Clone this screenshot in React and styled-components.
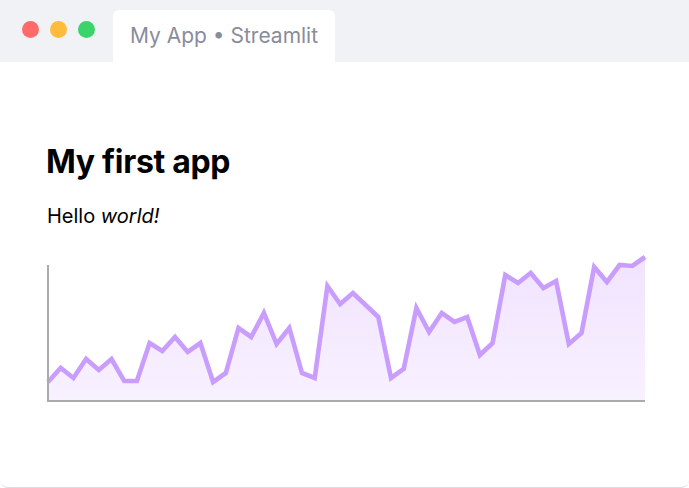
import React from "react";
import styled, { createGlobalStyle } from "styled-components";

const GlobalStyle = createGlobalStyle`
    html, body {
        margin: 0;
        padding: 0;
        background: #ffffff;
    }
    body {
        font-family: Inter, "Noto Sans", sans-serif;
    }
`;

const values = [
    382, 368, 378, 359, 370, 359, 381, 381, 343, 351, 337, 352, 343, 382, 373, 328,
    337, 313, 344, 328, 373, 378, 286, 304, 293, 305, 317, 378, 369, 308, 332, 313,
    322, 317, 355, 343, 275, 283, 273, 288, 281, 344, 333, 267, 282, 265, 266, 257,
];

const lights = ["#ff6b6b", "#ffbb3c", "#3ad46b"];

const App = () => {
    // chart origin is at page (46, 250)
    const step = (645 - 48) / (values.length - 1);
    const pts = values.map((v, i) => [48 + i * step - 46, v - 250]);
    const line = pts.map(([x, y]) => `${x.toFixed(1)},${y}`).join(" ");
    const area = `M${pts[0][0]},151 L${line.split(" ").join(" L")} L${pts[pts.length - 1][0]},151 Z`;

    return (
        <>
            <GlobalStyle />
            <StyledWindow>
                <StyledTitleBar>
                    <StyledLights>
                        {lights.map((c) => (
                            <StyledLight key={c} color={c} />
                        ))}
                    </StyledLights>
                    <StyledTab>My App • Streamlit</StyledTab>
                </StyledTitleBar>
                <StyledContent>
                    <h1>My first app</h1>
                    <p>
                        Hello <em>world!</em>
                    </p>
                    <StyledChart width="602" height="154" viewBox="0 0 602 154">
                        <defs>
                            <linearGradient id="fill" x1="0" y1="0" x2="0" y2="1">
                                <stop offset="0" stopColor="#f1e3ff" />
                                <stop offset="1" stopColor="#f8f1ff" />
                            </linearGradient>
                        </defs>
                        <path d={area} fill="url(#fill)" />
                        <polyline
                            points={line}
                            fill="none"
                            stroke="#c99dfd"
                            strokeWidth="4.6"
                            strokeLinejoin="miter"
                        />
                        <line x1="2" y1="15" x2="2" y2="152" stroke="#aaaaaa" strokeWidth="2" />
                        <line x1="1" y1="151" x2="599" y2="151" stroke="#aaaaaa" strokeWidth="2" />
                    </StyledChart>
                </StyledContent>
            </StyledWindow>
        </>
    );
};

//styled components
const StyledWindow = styled.div`
    width: 689px;
    height: 488px;
    box-sizing: border-box;
    border-bottom: 1px solid #dcdde2;
    border-radius: 0 0 8px 8px;
    overflow: hidden;
    display: flex;
    flex-direction: column;
`;
const StyledTitleBar = styled.div`
    height: 62px;
    flex-shrink: 0;
    background: #f0f2f6;
    display: flex;
    align-items: flex-end;
    padding-left: 22px;
`;
const StyledLights = styled.div`
    display: flex;
    gap: 11px;
    align-self: flex-start;
    margin-top: 21px;
`;
const StyledLight = styled.span`
    width: 17px;
    height: 17px;
    border-radius: 50%;
    background: ${(p) => p.color};
`;
const StyledTab = styled.div`
    margin-left: 18px;
    width: 222px;
    height: 52px;
    box-sizing: border-box;
    background: #ffffff;
    border-radius: 6px 6px 0 0;
    display: flex;
    align-items: center;
    justify-content: center;
    padding-bottom: 2px;
    font-size: 21px;
    color: #8a8c9c;
`;
const StyledContent = styled.div`
    flex: 1;
    padding: 80px 0 0 46px;
    h1 {
        margin: 0;
        font-size: 32px;
        font-weight: 700;
        line-height: 40px;
        color: #000;
        letter-spacing: -0.3px;
    }
    p {
        margin: 20px 0 0 1px;
        font-size: 20px;
        line-height: 28px;
        color: #000;
    }
`;
const StyledChart = styled.svg`
    display: block;
    margin-top: 20px;
`;

export default App;
